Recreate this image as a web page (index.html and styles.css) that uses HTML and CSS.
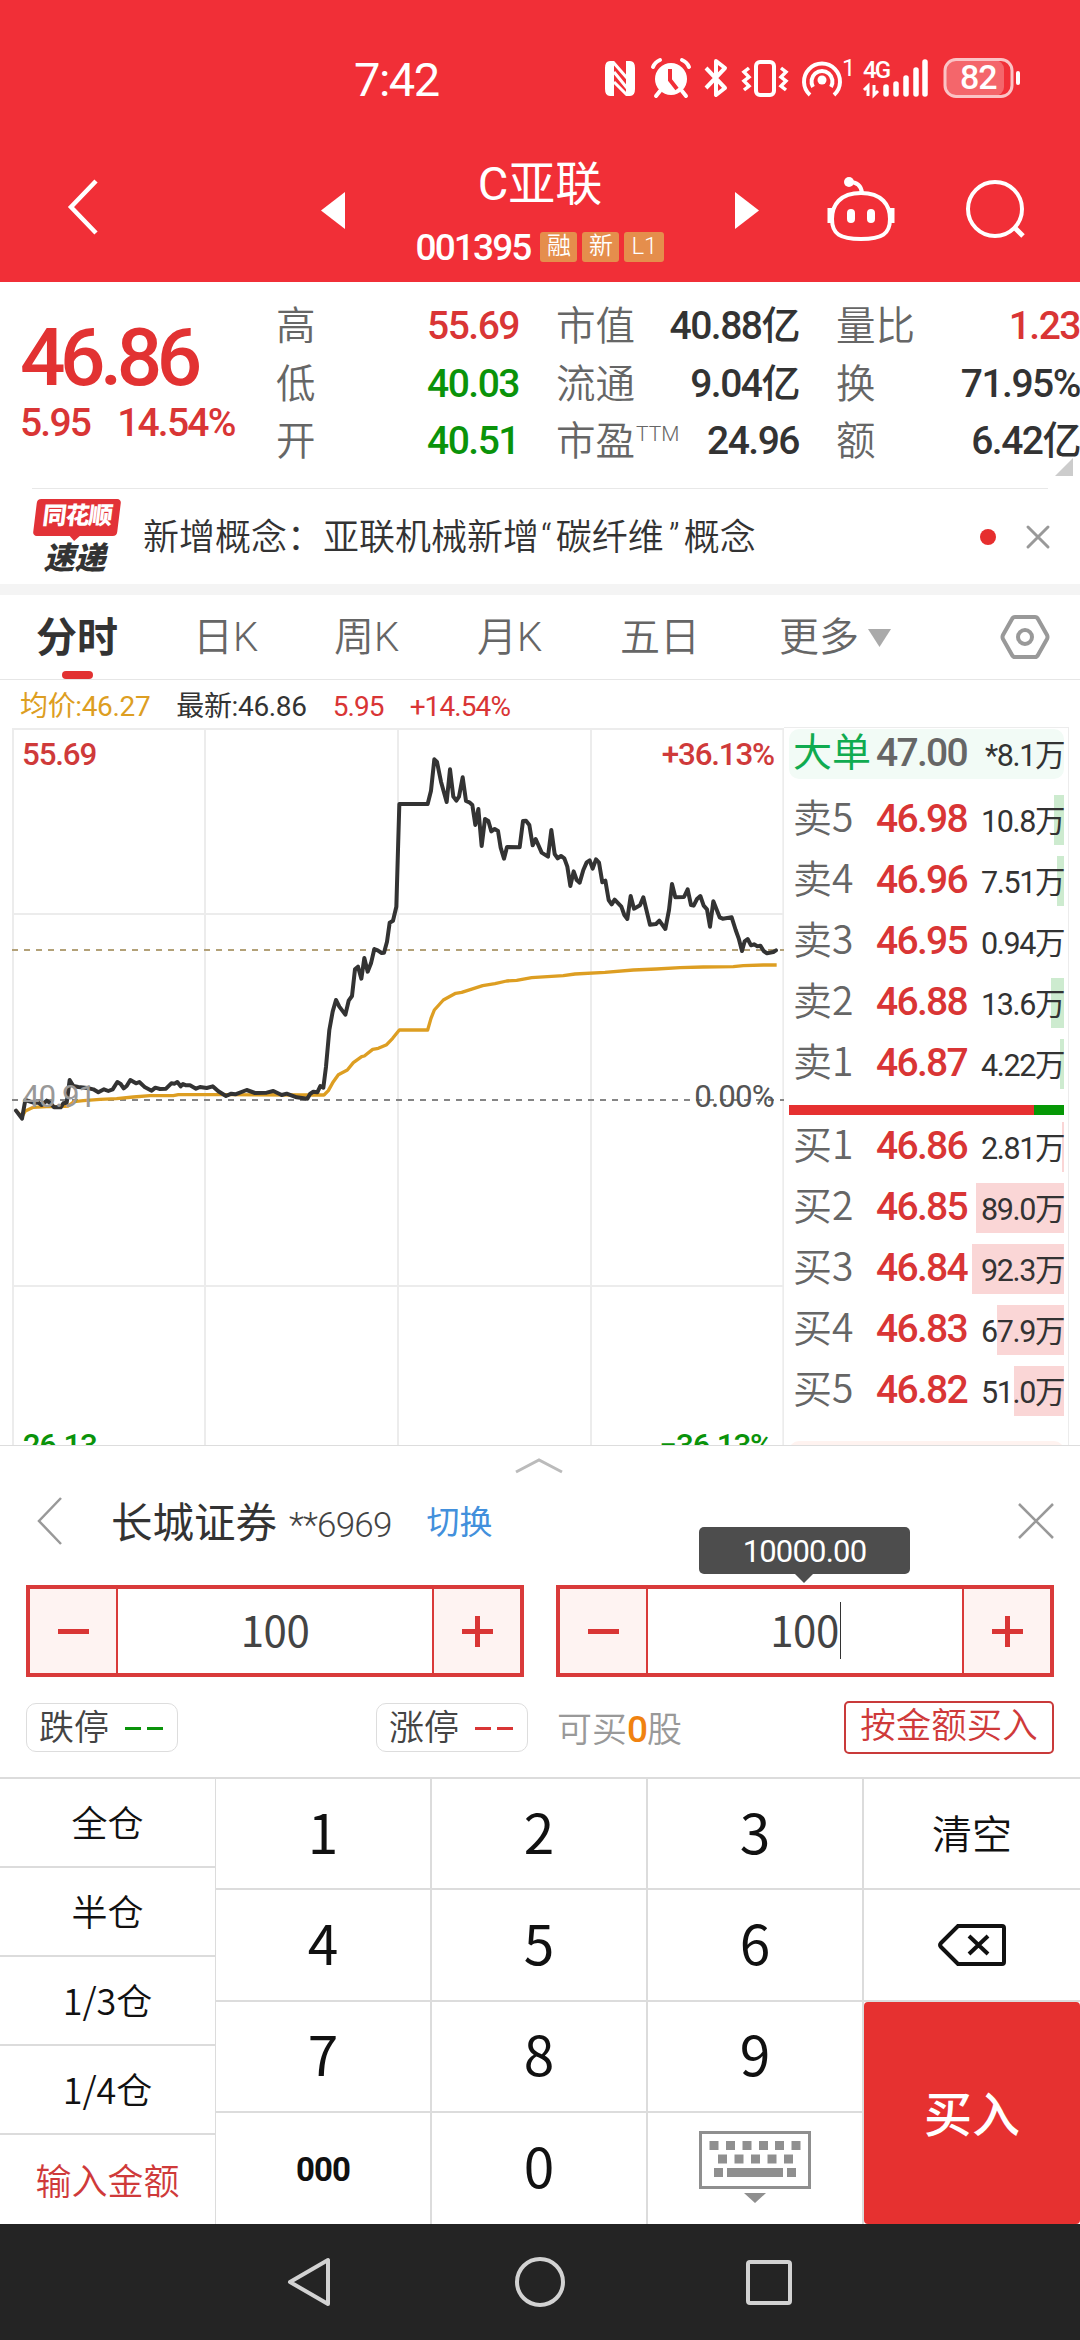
FILE: index.html
```html
<!DOCTYPE html>
<html lang="zh-CN">
<head>
  <meta charset="UTF-8" />
  <meta name="viewport" content="width=device-width, initial-scale=1.0"/>
  <title>C亚联 001395</title>
  <link rel="stylesheet" href="styles.css">
</head>
<body>
  <header class="header">
    <div class="status">
      <span class="clock">7:42</span>
      <svg class="status-icons" width="430" height="60" viewBox="0 0 430 60" fill="none" stroke="#fff" stroke-width="4">
        <!-- nfc -->
        <path d="M13 4h-3q-4 0-4 6v21q0 6 4 6h3V4zM27 4h3q4 0 4 6v21q0 6-4 6h-3z" fill="#fff" stroke-width="2"/>
        <path d="M13 4l14 16M14 14l13 16M14 24l13 13" stroke-width="3"/>
        <!-- alarm -->
        <circle cx="71" cy="21" r="16" fill="#fff" stroke="none"/>
        <path d="M53 9q2-5 7-7M89 9q-2-5-7-7M60 33l-4 5M82 33l4 5" stroke-linecap="round"/>
        <path d="M70 11v11l7 9" stroke="#f12f37"/>
        <!-- bluetooth -->
        <path d="M106 10l19 20-9 7V3l9 7-19 20" stroke-linejoin="round"/>
        <!-- vibrate -->
        <rect x="156" y="4" width="18" height="33" rx="4"/>
        <path d="M149 10l-5 4 5 5-5 4 5 5-5 4M181 10l5 4-5 5 5 4-5 5 5 4" stroke-width="3.500"/>
        <!-- hotspot -->
        <path d="M210 37a18 18 0 1 1 24 0M213 29a10.500 10.500 0 1 1 18 0"/>
        <circle cx="222" cy="22" r="4.500" fill="#fff" stroke="none"/>
        <text x="242" y="18" class="tiny">1</text>
        <text x="263" y="20" class="net">4G</text>
        <path d="M268 38V28l-4 4M274 27v10l4-4" stroke-width="3"/>
        <!-- signal -->
        <path d="M286 36v-7M296 36V26M306 36V20M316 36V12M325 36V4" stroke-width="5.500" stroke-linecap="round"/>
        <!-- battery -->
        <rect x="346" y="2" width="58" height="36" fill="#f4666b" stroke="none" rx="9"/>
        <rect x="345" y="1.500" width="67" height="37" rx="11" stroke="#fbc3c5" stroke-width="3"/>
        <path d="M418 15v10" stroke-linecap="round"/>
        <text x="360" y="31" class="level">82</text>
      </svg>
    </div>
    <div class="titlebar">
      <svg class="back" width="36" height="60" viewBox="0 0 36 60"><path d="M33 3L8 29l25 26" fill="none" stroke="#fff" stroke-width="4.500"/></svg>
      <svg class="prev" width="24" height="37" viewBox="0 0 24 37"><path d="M24 0v37L0 18.500z" fill="#fff"/></svg>
      <div class="title">
        <h1>C亚联</h1>
        <div class="code"><b>001395</b><i>融</i><i>新</i><i class="wide">L1</i></div>
      </div>
      <svg class="next" width="24" height="37" viewBox="0 0 24 37"><path d="M0 0v37l24-18.500z" fill="#fff"/></svg>
      <svg class="robot" width="72" height="66" viewBox="0 0 72 66" fill="none" stroke="#fff" stroke-width="4">
        <circle cx="24" cy="6" r="5" fill="#fff" stroke="none"/>
        <path d="M24 6q12 0 13 11"/>
        <path d="M36 17C15 17 7 29 7 43c0 15 8 20 29 20s29-5 29-20c0-14-8-26-29-26z"/>
        <path d="M5 32v15M67 32v15" stroke-width="5"/>
        <path d="M26 37v6M46 37v6" stroke-width="8" stroke-linecap="round"/>
      </svg>
      <svg class="search" width="62" height="62" viewBox="0 0 62 62" fill="none" stroke="#fff" stroke-width="4"><circle cx="31" cy="31" r="27"/><path d="M50 49l9 9" stroke-width="5"/></svg>
    </div>
  </header>

  <section class="quote">
    <div class="price">
      <strong>46.86</strong>
      <div class="change"><span>5.95</span><span>14.54%</span></div>
    </div>
    <div class="stats">
      <label>高</label><span class="red">55.69</span><label>市值</label><span>40.88亿</span><label>量比</label><span class="red">1.23</span>
      <label>低</label><span class="green">40.03</span><label>流通</label><span>9.04亿</span><label>换</label><span>71.95%</span>
      <label>开</label><span class="green">40.51</span><label>市盈<sup>TTM</sup></label><span>24.96</span><label>额</label><span>6.42亿</span>
    </div>
    <svg class="corner" width="18" height="18"><path d="M18 0v18H0z" fill="#ccc"/></svg>
  </section>

  <section class="news">
    <div class="brand"><span class="brand-top">同花顺</span><span class="brand-bottom">速递</span></div>
    <p>新增概念：亚联机械新增<span class="open">“</span>碳纤维<span class="shut">”</span>概念</p>
    <span class="dot"></span>
    <svg width="26" height="26" viewBox="0 0 26 26"><path d="M3 3l20 20M23 3L3 23" stroke="#999" stroke-width="3" stroke-linecap="round"/></svg>
  </section>

  <nav class="tabs">
    <span class="active">分时</span>
    <span>日K</span>
    <span>周K</span>
    <span>月K</span>
    <span>五日</span>
    <span class="more">更多<svg width="23" height="18"><path d="M0 0h23L11.500 18z" fill="#aaa"/></svg></span>
    <svg class="setting" width="50" height="48" viewBox="0 0 50 48" fill="none" stroke="#999" stroke-width="4"><path d="M15 4h20q2 0 3 2l9 16q1 2 0 4l-9 16q-1 2-3 2H15q-2 0-3-2L3 26q-1-2 0-4l9-16q1-2 3-2z"/><circle cx="25" cy="24" r="7"/></svg>
  </nav>

  <main class="market">
    <div class="left">
      <div class="legend">
        <span class="gold">均价:46.27</span><span>最新:46.86</span><span class="red">5.95</span><span class="red">+14.54%</span>
      </div>
      <svg class="chart" width="784" height="725" viewBox="0 0 2352 2175">
        <path d="M39 24V2175M615 24V2175M1194 24V2175M1773 24V2175M2350 24V2175M36 27H2352M36 582H2352M36 1698H2352" stroke="#ececec" stroke-width="6" fill="none"/>
        <path d="M36 690H2352" stroke="#b3a178" stroke-width="6" stroke-dasharray="18 18"/>
        <path d="M36 1140H2352" stroke="#858585" stroke-width="6" stroke-dasharray="18 18"/>
        <polyline class="avg" points="48,1172 66,1190 76,1173 100,1162 140,1160 182,1160 205,1158 222,1145 250,1142 300,1138 350,1136 400,1131 450,1127 520,1127 535,1124 680,1124 900,1125 972,1125 985,1112 1000,1085 1015,1064 1042,1050 1060,1028 1085,1010 1093,1008 1118,988 1135,985 1160,974 1178,955 1198,930 1283,930 1293,895 1303,870 1330,840 1345,832 1367,820 1385,817 1448,797 1485,791 1520,783 1550,781 1595,773 1690,767 1725,762 1815,757 1900,750 1970,747 2040,743 2110,741 2200,740 2230,737 2290,735 2330,735"/>
        <polyline class="line" points="48,1172 66,1196 76,1140 100,1148 115,1148 125,1155 140,1142 152,1150 162,1162 182,1162 190,1150 200,1148 209,1080 220,1098 235,1101 262,1104 280,1108 295,1117 312,1108 325,1113 338,1108 352,1086 362,1092 371,1105 380,1098 391,1080 408,1090 418,1086 435,1102 455,1112 466,1103 480,1107 498,1106 514,1090 524,1091 532,1086 542,1099 549,1092 558,1096 570,1096 588,1106 600,1101 620,1104 638,1099 655,1114 678,1128 694,1121 706,1123 740,1110 765,1119 800,1118 820,1113 845,1125 860,1121 890,1132 922,1136 930,1122 940,1115 952,1117 961,1098 970,1103 978,1040 988,930 998,875 1008,840 1018,860 1036,884 1046,842 1056,828 1065,748 1074,740 1084,776 1093,714 1103,755 1113,730 1123,687 1133,691 1145,699 1152,698 1161,665 1169,608 1179,602 1189,560 1198,252 1283,252 1293,212 1303,118 1311,126 1323,185 1340,246 1350,148 1360,230 1369,242 1377,230 1388,172 1398,243 1408,247 1417,255 1426,315 1435,267 1445,378 1455,297 1465,303 1474,334 1484,327 1494,333 1502,383 1512,416 1521,381 1559,382 1569,303 1578,302 1588,315 1598,376 1607,357 1625,398 1644,410 1654,330 1664,402 1673,415 1683,408 1693,415 1702,440 1711,498 1721,454 1730,480 1739,488 1750,450 1760,427 1769,421 1778,446 1788,418 1797,428 1807,487 1816,482 1826,540 1835,553 1844,539 1864,560 1873,585 1882,597 1892,528 1902,566 1920,556 1930,532 1950,614 1968,612 1978,602 1996,627 2007,570 2016,492 2026,532 2052,531 2063,508 2073,555 2081,557 2091,537 2101,528 2111,557 2121,568 2130,620 2140,544 2159,592 2168,596 2195,592 2207,630 2216,655 2226,693 2234,664 2243,657 2253,676 2262,673 2272,679 2281,677 2291,693 2301,700 2320,696 2328,691"/>
        <text x="66" y="134" class="up">55.69</text>
        <text x="2322" y="134" class="up end">+36.13%</text>
        <text x="66" y="1160" class="base">40.91</text>
        <text x="2322" y="1160" class="zero end">0.00%</text>
        <text x="68" y="2207" class="down">26.13</text>
        <text x="2316" y="2207" class="down end">−36.13%</text>
      </svg>
    </div>
    <div class="book">
      <div class="row big"><label>大单</label><b>47.00</b><em>*8.1万</em></div>
      <div class="row sell"><i style="width:10px"></i><label>卖5</label><b>46.98</b><em>10.8万</em></div>
      <div class="row sell"><i style="width:7px"></i><label>卖4</label><b>46.96</b><em>7.51万</em></div>
      <div class="row sell"><i style="width:0"></i><label>卖3</label><b>46.95</b><em>0.94万</em></div>
      <div class="row sell"><i style="width:13px"></i><label>卖2</label><b>46.88</b><em>13.6万</em></div>
      <div class="row sell"><i style="width:4px"></i><label>卖1</label><b>46.87</b><em>4.22万</em></div>
      <div class="ratio"></div>
      <div class="row buy"><i style="width:2px"></i><label>买1</label><b>46.86</b><em>2.81万</em></div>
      <div class="row buy"><i style="width:88px"></i><label>买2</label><b>46.85</b><em>89.0万</em></div>
      <div class="row buy"><i style="width:92px"></i><label>买3</label><b>46.84</b><em>92.3万</em></div>
      <div class="row buy"><i style="width:67px"></i><label>买4</label><b>46.83</b><em>67.9万</em></div>
      <div class="row buy"><i style="width:50px"></i><label>买5</label><b>46.82</b><em>51.0万</em></div>
      <div class="next-big"></div>
    </div>
  </main>

  <section class="trade">
    <svg class="handle" width="50" height="18" viewBox="0 0 50 18"><path d="M2 16L25 4l23 12" fill="none" stroke="#bbb" stroke-width="3"/></svg>
    <div class="account">
      <svg width="26" height="48" viewBox="0 0 26 48"><path d="M24 1L2 24l22 23" fill="none" stroke="#999" stroke-width="2.500"/></svg>
      <span class="broker">长城证券</span>
      <span class="number">**6969</span>
      <a class="switch">切换</a>
      <svg class="close" width="36" height="36" viewBox="0 0 36 36"><path d="M1 1l34 34M35 1L1 35" stroke="#999" stroke-width="2.500"/></svg>
    </div>
    <div class="inputs">
      <div class="stepper"><button class="minus"></button><span>100</span><button class="plus"></button></div>
      <div class="stepper"><button class="minus"></button><span class="focus">100</span><button class="plus"></button>
        <div class="tip">10000.00</div>
      </div>
    </div>
    <div class="limits">
      <span class="pill">跌停<i class="dash green"></i></span>
      <span class="pill second">涨停<i class="dash red"></i></span>
      <span class="can">可买<b>0</b>股</span>
      <button class="by-amount">按金额买入</button>
    </div>
  </section>

  <section class="keypad">
    <div class="shares">
      <button>全仓</button>
      <button>半仓</button>
      <button>1/3仓</button>
      <button>1/4仓</button>
      <button class="red">输入金额</button>
    </div>
    <div class="keys">
      <button>1</button><button>2</button><button>3</button><button class="clear">清空</button>
      <button>4</button><button>5</button><button>6</button>
      <button class="icon">
        <svg width="68" height="42" viewBox="0 0 68 42" fill="none" stroke="#111" stroke-width="4"><path d="M20 2h44q2 0 2 2v34q0 2-2 2H20L3 23q-2-2 0-4z"/><path d="M31 12l19 18M50 12L31 30"/></svg>
      </button>
      <button>7</button><button>8</button><button>9</button><button class="buy-key">买入</button>
      <button class="zeros">000</button><button>0</button>
      <button class="icon">
        <svg class="keyboard" width="112" height="74" viewBox="0 0 112 74" fill="#8f8f8f">
          <rect x="1.500" y="1.500" width="109" height="55" fill="none" stroke="#8f8f8f" stroke-width="3"/>
          <path d="M10.500 10h9v9h-9zM27 10h9v9h-9zM43.500 10h9v9h-9zM60 10h9v9h-9zM76 10h9v9h-9zM92.500 10h9v9h-9zM19 23.500h9v9h-9zM35.500 23.500h9v9h-9zM52 23.500h9v9h-9zM68.500 23.500h9v9h-9zM85 23.500h9v9h-9zM15 37h9v9h-9zM28 37h56v9H28zM88 37h9v9h-9zM45 62h22L56 72z"/>
        </svg>
      </button>
    </div>
  </section>

  <footer class="navbar">
    <svg width="46" height="54" viewBox="0 0 46 54"><path d="M42 5v44L4 27z"/></svg>
    <svg width="54" height="54" viewBox="0 0 54 54"><circle cx="29" cy="27" r="23"/></svg>
    <svg width="50" height="54" viewBox="0 0 50 54"><rect x="4" y="7" width="42" height="41" rx="2"/></svg>
  </footer>
</body>
</html>
```

FILE: styles.css
```css
* {
  box-sizing: border-box;
}

body {
  margin: 0;
  width: 1080px;
  height: 2340px;
  overflow: hidden;
  background: #fff;
  color: #333;
  font-family: Roboto, "Noto Sans CJK SC", sans-serif;
  line-height: 1;
}

button {
  margin: 0;
  padding: 0;
  border: none;
  background: none;
  font-family: inherit;
  color: inherit;
}

svg {
  display: block;
  flex: none;
}

i, em {
  font-style: normal;
}

.red { color: #d93535; }
.green { color: #0a930a; }
.gold { color: #dd9e22; }

/* header */
.header {
  height: 282px;
  background: #f12f37;
  color: #fff;
}

.status {
  height: 130px;
  padding: 56px 56px 0 354px;
  display: flex;
  justify-content: space-between;
}

.clock {
  font-size: 47px;
  letter-spacing: -1.500px;
}

.status-icons {
  margin-top: 2px;
  margin-right: -6px;
  overflow: visible;
}

.status-icons text {
  fill: #fff;
  stroke: none;
}

.tiny { font-size: 24px; }
.net { font-size: 24px; font-weight: 500; letter-spacing: -2px; }
.level { font-size: 34px; font-weight: 500; letter-spacing: -1px; }

.titlebar {
  height: 152px;
  padding: 26px 54px 0 63px;
  display: flex;
}

.back { margin-top: 22px; }
.prev { margin: 36px 0 0 222px; }
.next { margin-top: 36px; }
.robot { margin: 20px 0 0 66px; }
.search { margin: 22px 0 0 67px; }

.title {
  width: 390px;
  text-align: center;
}

h1 {
  margin: 5px 0 25px;
  font-size: 47px;
  line-height: 46px;
  font-weight: 400;
}

.code {
  display: flex;
  justify-content: center;
  align-items: center;
  gap: 5px;
}

.code b {
  margin-right: 5px;
  font-size: 37px;
  font-weight: 500;
  line-height: 29px;
  letter-spacing: -1.9px;
}

.code i {
  width: 37px;
  height: 30px;
  border-radius: 3px;
  background: #e58e4c;
  font-size: 24px;
  line-height: 29px;
  font-weight: 350;
}

.code .wide { width: 40px; }

/* quote */
.quote {
  position: relative;
  height: 207px;
  display: flex;
}

.quote::after {
  content: "";
  position: absolute;
  left: 32px;
  right: 32px;
  bottom: 0;
  height: 1px;
  background: #e8e8e8;
}

.price {
  width: 277px;
  padding: 36px 0 0 20px;
  color: #e23232;
  font-weight: 500;
}

.price strong {
  display: block;
  font-size: 80px;
  font-weight: 500;
  letter-spacing: -5.500px;
}

.change {
  display: flex;
  gap: 27px;
  margin-top: 6px;
  font-size: 39px;
  letter-spacing: -1.8px;
  color: #d93535;
}

.stats {
  display: grid;
  grid-template-columns: 80px 163px 150px 130px 130px 151px;
  grid-auto-rows: 57.500px;
  align-items: center;
  width: 804px;
  padding-top: 16px;
}

.stats label {
  font-size: 39.500px;
  font-weight: 350;
  color: #666;
  white-space: nowrap;
}

.stats label:nth-of-type(3n+2), .stats label:nth-of-type(3n) {
  padding-left: 37px;
}

.stats sup {
  font-size: 21px;
  font-weight: 300;
  margin-left: 1px;
  vertical-align: 14px;
  line-height: 0;
}

.stats span {
  text-align: right;
  font-size: 39px;
  font-weight: 500;
  letter-spacing: -1.500px;
  white-space: nowrap;
}

.corner {
  position: absolute;
  left: 1055px;
  top: 176px;
}

/* news */
.news {
  height: 95px;
  padding-left: 33px;
  display: flex;
  align-items: center;
}

.brand {
  width: 88px;
  height: 75px;
  position: relative;
  text-align: center;
  font-weight: 900;
  font-style: italic;
}

.brand-top {
  display: block;
  height: 37px;
  margin: 0 2px;
  border-radius: 4px;
  background: #e23237;
  color: #fff;
  font-size: 24px;
  line-height: 35px;
  letter-spacing: -1px;
  transform: skewX(-7deg);
  font-style: normal;
}

.brand-top::after {
  content: "";
  position: absolute;
  left: 36px;
  top: 36px;
  border: 6px solid transparent;
  border-top-color: #e23237;
  border-bottom: none;
}

.brand-bottom {
  display: block;
  font-size: 31px;
  margin: 7px 0 0 -5px;
}

.news p {
  margin: 2px 0 0 22px;
  width: 837px;
  font-size: 36px;
  font-weight: 350;
  white-space: nowrap;
}

.open { margin: 0 4px 0 2px; }
.shut { margin: 0 4px 0 5px; }

.dot {
  width: 16px;
  height: 16px;
  border-radius: 50%;
  background: #e62e2e;
}

.news > svg {
  margin-left: 29px;
}

/* tabs */
.tabs {
  height: 96px;
  border-top: 11px solid #f4f4f4;
  border-bottom: 1px solid #e6e6e6;
  padding-left: 36px;
  display: flex;
  align-items: center;
  font-size: 40px;
  font-weight: 350;
  color: #666;
  position: relative;
}

.tabs span { width: 143px; padding-top: 2px; }
.tabs span:first-child { width: 157px; }
.tabs span:nth-child(2) { width: 141px; }
.tabs span:nth-child(5) { width: 159px; }
.tabs .more { width: 221px; display: flex; align-items: center; gap: 9px; }

.tabs .active {
  font-size: 41px;
  font-weight: 700;
  color: #333;
}

.tabs .active::after {
  content: "";
  position: absolute;
  left: 62px;
  bottom: 0;
  width: 31px;
  height: 8px;
  border-radius: 4px;
  background: #e23232;
}

/* chart and order book */
.market {
  height: 765px;
  display: flex;
  overflow: hidden;
}

.left { width: 784px; }

.legend {
  height: 40px;
  padding: 13px 0 0 20px;
  display: flex;
  gap: 26px;
  font-size: 28px;
  letter-spacing: -.35px;
}

.legend .red { letter-spacing: -.9px; }

.avg {
  fill: none;
  stroke: #dd9e22;
  stroke-width: 10;
  stroke-linejoin: round;
}

.line {
  fill: none;
  stroke: #333;
  stroke-width: 12;
  stroke-linejoin: round;
  stroke-linecap: round;
}

.chart text {
  font-size: 94px;
  font-weight: 500;
  letter-spacing: -3.500px;
}

.chart .end { text-anchor: end; }
.chart .up { fill: #cf3a3a; }
.chart .down { fill: #0a930a; }
.chart .zero { fill: #555; font-weight: 400; letter-spacing: -2.500px; }
.chart .base { fill: #999; font-weight: 400; }

.book {
  width: 285px;
  margin-top: 47px;
  padding: 1px 4px 0 5px;
  border-top: 1px solid #ececec;
  border-right: 1px solid #ececec;
}

.row {
  position: relative;
  height: 50px;
  margin-bottom: 11px;
  padding-left: 4px;
  display: flex;
  align-items: baseline;
  line-height: 40px;
}

.row label {
  width: 83px;
  font-family: "Noto Sans CJK SC", sans-serif;
  font-size: 39px;
  font-weight: 350;
  color: #666;
}

.row b {
  width: 91px;
  font-size: 39px;
  font-weight: 500;
  letter-spacing: -1.7px;
  color: #d93535;
}

.row em {
  flex: 1;
  text-align: right;
  font-size: 30.500px;
  letter-spacing: -1.4px;
  white-space: nowrap;
}

.row > * { position: relative; }

.row i {
  position: absolute;
  right: 0;
  top: 0;
  height: 50px;
}

.sell i { background: #cdebcf; }
.buy i { background: #fad6d6; }

.big {
  margin-bottom: 16px;
  border-radius: 10px;
  background: #f2fbf6;
}

.big label { color: #10ab50; font-weight: 400; }
.big b { color: #666; }

.ratio {
  height: 10px;
  margin: 16px 0 7px;
  background: linear-gradient(to right, #e63030 245px, #069806 245px);
}

.next-big {
  height: 50px;
  margin-top: 25px;
  border-radius: 10px;
  background: #fff3f0;
}

/* trade panel */
.trade {
  height: 332px;
  border-top: 1px solid #ddd;
}

.handle { margin: 10px auto 0 514px; }

.account {
  height: 60px;
  margin-top: 17px;
  padding: 0 26px 0 37px;
  display: flex;
  align-items: center;
}

.broker {
  margin: 5px 0 0 48px;
  font-size: 41.500px;
}

.number {
  margin: 9px 0 0 12px;
  font-size: 35px;
  letter-spacing: -.8px;
  font-weight: 300;
  color: #444;
}

.switch {
  margin: 2px 0 0 35px;
  font-size: 33px;
  color: #4290dc;
}

.close { margin-left: auto; }

.inputs {
  margin-top: 34px;
  padding: 0 26px;
  display: flex;
  justify-content: space-between;
}

.stepper {
  position: relative;
  width: 498px;
  height: 92px;
  border: 4px solid #d93a3a;
  display: flex;
}

.stepper button {
  width: 86px;
  background: #fef3f2;
  display: flex;
  align-items: center;
  justify-content: center;
  position: relative;
}

.stepper button::before {
  content: "";
  width: 31px;
  height: 5px;
  background: #d93535;
}

.stepper .plus::after {
  content: "";
  position: absolute;
  width: 5px;
  height: 31px;
  background: #d93535;
}

.stepper span {
  flex: 1;
  padding-bottom: 4px;
  display: flex;
  align-items: center;
  justify-content: center;
  border: solid #d93a3a;
  border-width: 0 2px;
  font-family: "Noto Sans CJK SC", sans-serif;
  font-size: 42px;
  letter-spacing: -.5px;
  color: #444;
}

.stepper .focus::after {
  content: "";
  width: 1px;
  height: 57px;
  margin: 3px -1px 0 1px;
  background: #333;
}

.tip {
  position: absolute;
  left: 139px;
  top: -62px;
  width: 211px;
  height: 47px;
  border-radius: 5px;
  background: #4d4d4d;
  color: #fff;
  font-size: 31px;
  line-height: 49px;
  letter-spacing: -.8px;
  text-align: center;
}

.tip::after {
  content: "";
  position: absolute;
  left: 95px;
  top: 46px;
  border: 10px solid transparent;
  border-top-color: #4d4d4d;
  border-bottom: none;
}

.limits {
  margin-top: 24px;
  padding: 0 26px;
  height: 53px;
  display: flex;
  align-items: center;
  font-size: 35px;
  font-weight: 350;
  color: #444;
}

.pill {
  width: 152px;
  height: 49px;
  padding: 2px 14px 0 12px;
  border: 1px solid #ddd;
  border-radius: 10px;
  display: flex;
  align-items: center;
  justify-content: space-between;
}

.second { margin-left: 198px; }

.dash {
  width: 38px;
  height: 3px;
  background: linear-gradient(to right, currentColor 16px, transparent 16px, transparent 22px, currentColor 22px);
}

.can {
  margin: 3px 0 0 29px;
  color: #999;
}

.can b {
  color: #f08210;
  font-size: 37px;
  font-weight: 500;
  letter-spacing: -1px;
}

.by-amount {
  margin-left: auto;
  width: 210px;
  height: 53px;
  padding-bottom: 2px;
  border: 2px solid #c93a3a;
  border-radius: 5px;
  font-size: 35.500px;
  font-weight: 350;
  line-height: 43px;
  color: #cf3a3a;
}

/* keypad */
.keypad {
  height: 447px;
  display: flex;
  border-top: 2px solid #dcdcdc;
}

.shares {
  width: 216px;
  border-right: 1px solid #dcdcdc;
  display: grid;
  grid-template-rows: repeat(5, 1fr);
}

.shares button {
  padding-bottom: 4px;
  border-bottom: 2px solid #dcdcdc;
  font-family: "Noto Sans CJK SC", sans-serif;
  font-size: 36px;
  font-weight: 350;
  color: #111;
}

.shares button:last-child {
  padding-bottom: 2px;
  border-bottom: none;
  color: #cf3a3a;
}

.keys {
  flex: 1;
  display: grid;
  grid-template-columns: repeat(4, 216px);
  grid-template-rows: repeat(4, 1fr);
}

.keys button {
  padding-bottom: 7px;
  border: solid #dcdcdc;
  border-width: 0 2px 2px 0;
  font-family: "Noto Sans CJK SC", sans-serif;
  font-size: 55px;
  line-height: 1;
  color: #111;
  display: flex;
  align-items: center;
  justify-content: center;
}

.keys .icon { padding: 0; }
.keys .clear, .keys button:nth-child(8) { border-right: none; }
.keys .clear { font-size: 40px; font-weight: 350; padding-bottom: 3px; }
.keys .zeros { font-family: Roboto, sans-serif; font-size: 33px; font-weight: 700; letter-spacing: -1px; padding: 2px 0 0; }
.keys button:nth-child(n+13) { border-bottom: none; }

.keys .buy-key {
  grid-row: 3 / 5;
  grid-column: 4;
  padding-bottom: 4px;
  border: none;
  border-radius: 4px;
  background: #e63130;
  color: #fff;
  font-size: 48px;
  font-weight: 500;
}

/* system navigation */
.navbar {
  height: 116px;
  background: #242424;
  display: flex;
  align-items: center;
  justify-content: center;
  gap: 179px;
}

.navbar svg {
  fill: none;
  stroke: #d2d2d2;
  stroke-width: 4;
  stroke-linejoin: round;
}
```
